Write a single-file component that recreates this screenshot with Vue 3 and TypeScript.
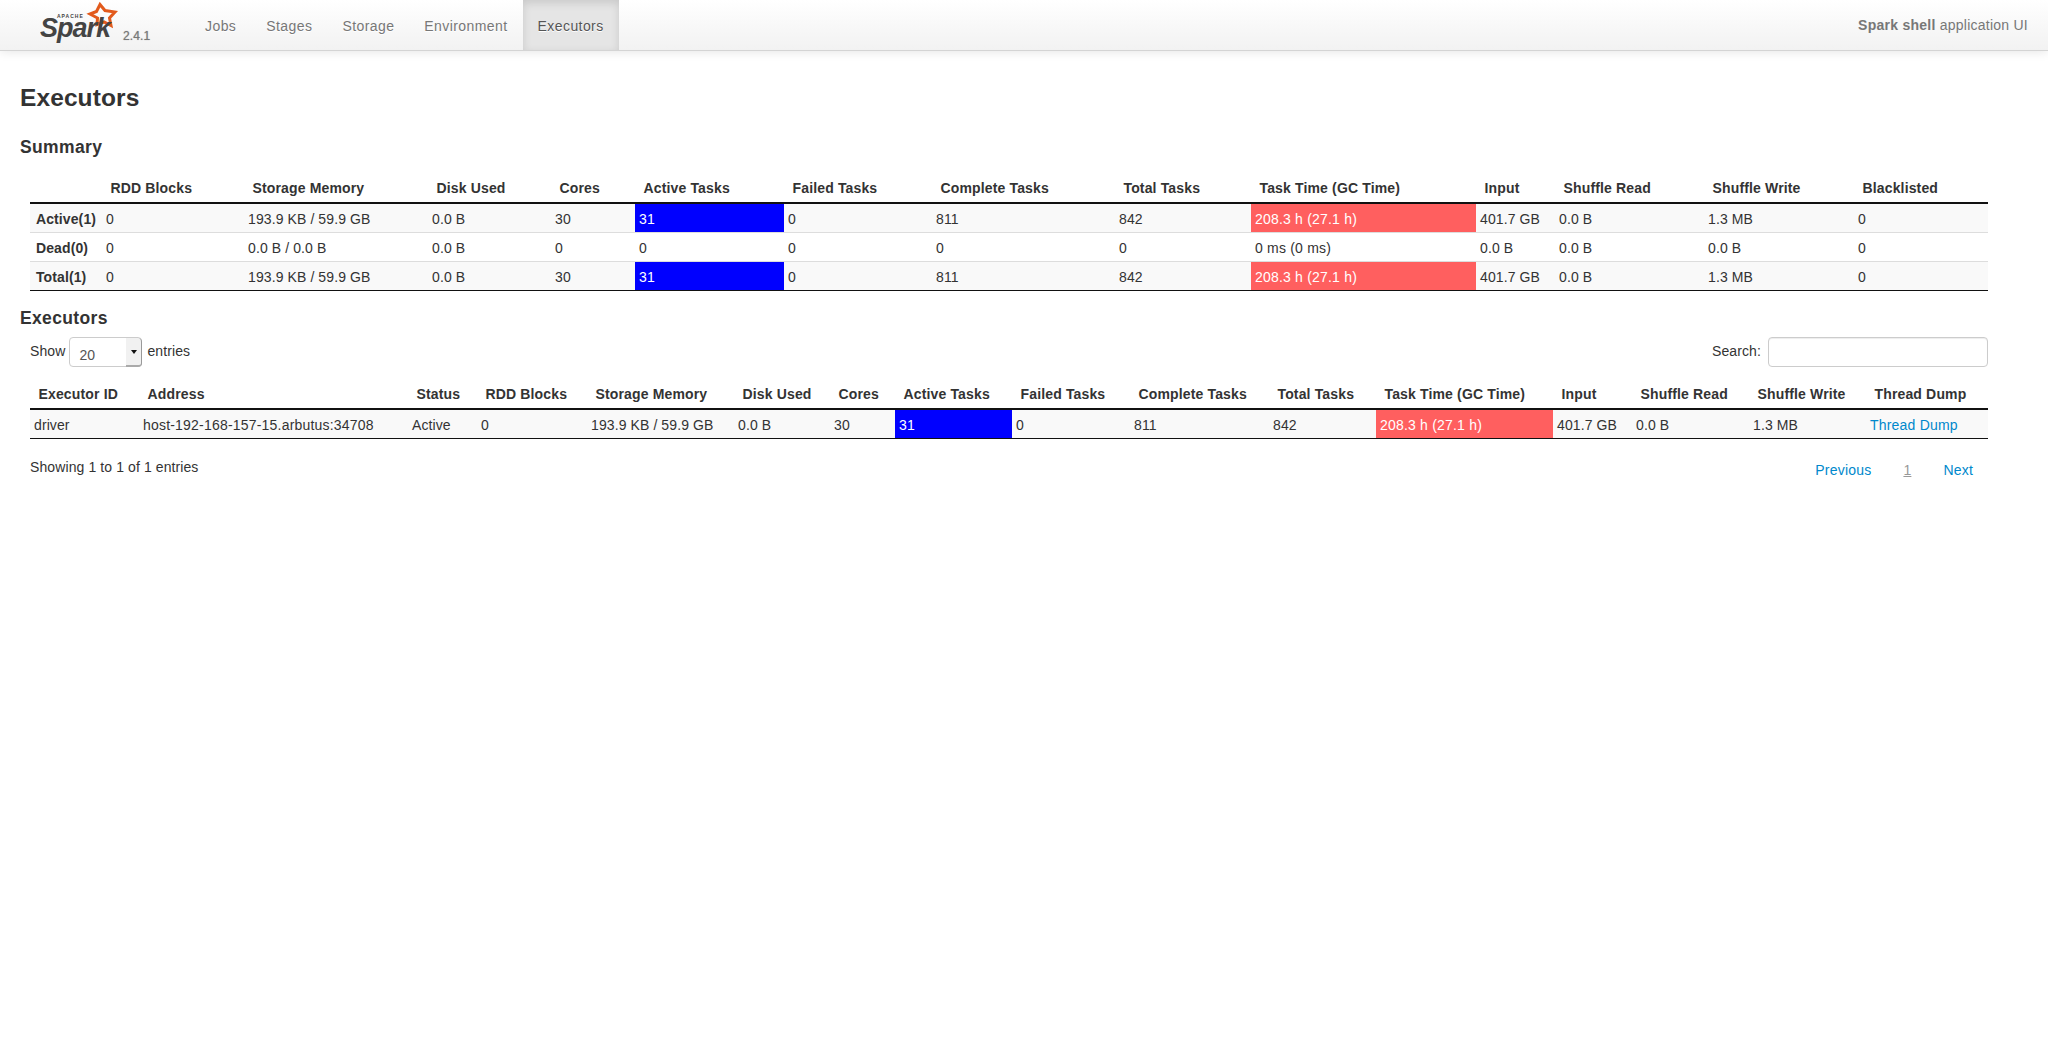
<template>
  <div class="page">
    <!-- top navbar -->
    <header class="navbar">
      <div class="brand">
        <svg class="logo" width="83" height="50" viewBox="0 0 83 50">
          <path
            d="M60 4.5 L65 10.5 L75 12 L69.5 18 L71 25.5 L64 22 L57 24.5 L57.5 18 L50 14 L56.5 11.5 Z"
            fill="none"
            stroke="#e25a1c"
            stroke-width="3"
            stroke-linejoin="miter"
          />
          <text class="logo-apache" x="17" y="18">APACHE</text>
          <text class="logo-spark" x="0" y="37">Spark</text>
        </svg>
        <span class="version">2.4.1</span>
      </div>
      <nav class="nav">
        <a v-for="item in navItems" :key="item" class="nav-item" :class="{ active: item === 'Executors' }">{{ item }}</a>
      </nav>
      <p class="app-name"><strong>Spark shell</strong> application UI</p>
    </header>

    <main class="content">
      <h3>Executors</h3>
      <h4>Summary</h4>
      <table class="grid summary">
        <colgroup>
          <col v-for="w in summaryWidths" :key="w.id" :style="{ width: w.px + 'px' }" />
        </colgroup>
        <thead>
          <tr>
            <th v-for="h in summaryHead" :key="h">{{ h }}</th>
          </tr>
        </thead>
        <tbody>
          <tr v-for="row in summaryRows" :key="row.label">
            <td class="label">{{ row.label }}</td>
            <td v-for="(c, i) in row.cells" :key="i" :class="cellClass(c, row.active)">{{ c }}</td>
          </tr>
        </tbody>
      </table>

      <h4 class="second">Executors</h4>
      <div class="controls">
        <label class="length">
          Show
          <span class="select-box">
            <select>
              <option>20</option>
              <option>40</option>
              <option>60</option>
            </select>
            <span class="select-btn"><i class="caret" /></span>
          </span>
          entries
        </label>
        <label class="search">
          Search:
          <input type="text" />
        </label>
      </div>
      <table class="grid executors">
        <colgroup>
          <col v-for="w in execWidths" :key="w.id" :style="{ width: w.px + 'px' }" />
        </colgroup>
        <thead>
          <tr>
            <th v-for="h in execHead" :key="h">{{ h }}</th>
          </tr>
        </thead>
        <tbody>
          <tr>
            <td v-for="(c, i) in execRow" :key="i" :class="cellClass(c, true)">
              <a v-if="c === 'Thread Dump'" class="link">{{ c }}</a>
              <template v-else>{{ c }}</template>
            </td>
          </tr>
        </tbody>
      </table>
      <div class="footer-row">
        <span class="info">Showing 1 to 1 of 1 entries</span>
        <div class="pager">
          <a class="link">Previous</a>
          <a class="current">1</a>
          <a class="link">Next</a>
        </div>
      </div>
    </main>
  </div>
</template>

<script setup lang="ts">
const navItems = ['Jobs', 'Stages', 'Storage', 'Environment', 'Executors']

const toCols = (list: number[]) => list.map((px, id) => ({ id, px }))

const summaryWidths = toCols([72, 142, 184, 123, 84, 149, 148, 183, 136, 225, 79, 149, 150, 134])
const execWidths = toCols([109, 269, 69, 110, 147, 96, 65, 117, 118, 139, 107, 177, 79, 117, 117, 122])

const summaryHead = [
  '', 'RDD Blocks', 'Storage Memory', 'Disk Used', 'Cores', 'Active Tasks', 'Failed Tasks',
  'Complete Tasks', 'Total Tasks', 'Task Time (GC Time)', 'Input', 'Shuffle Read', 'Shuffle Write', 'Blacklisted'
]

const totals = ['0', '193.9 KB / 59.9 GB', '0.0 B', '30', '31', '0', '811', '842', '208.3 h (27.1 h)', '401.7 GB', '0.0 B', '1.3 MB', '0']

const summaryRows = [
  { label: 'Active(1)', active: true, cells: totals },
  { label: 'Dead(0)', active: false, cells: ['0', '0.0 B / 0.0 B', '0.0 B', '0', '0', '0', '0', '0', '0 ms (0 ms)', '0.0 B', '0.0 B', '0.0 B', '0'] },
  { label: 'Total(1)', active: true, cells: totals }
]

const execHead = [
  'Executor ID', 'Address', 'Status', 'RDD Blocks', 'Storage Memory', 'Disk Used', 'Cores', 'Active Tasks',
  'Failed Tasks', 'Complete Tasks', 'Total Tasks', 'Task Time (GC Time)', 'Input', 'Shuffle Read', 'Shuffle Write', 'Thread Dump'
]

const execRow = [
  'driver', 'host-192-168-157-15.arbutus:34708', 'Active', '0', '193.9 KB / 59.9 GB', '0.0 B', '30', '31', '0',
  '811', '842', '208.3 h (27.1 h)', '401.7 GB', '0.0 B', '1.3 MB', 'Thread Dump'
]

const cellClass = (value: string, active: boolean) => {
  if (value.startsWith('host-') || value === 'Thread Dump' || value.includes(' ms')) return 'wide'
  if (!active) return ''
  if (value === '31') return 'bar-blue'
  if (value.startsWith('208.3')) return 'bar-red wide'
  return ''
}
</script>

<style>
html,
body {
  margin: 0;
  background: #fff;
}
</style>

<style scoped>
.page {
  font-family: 'Liberation Sans', Arial, sans-serif;
  font-size: 14px;
  line-height: 20px;
  letter-spacing: 0.1px;
  color: #333;
}

.navbar {
  display: flex;
  align-items: stretch;
  height: 50px;
  border-bottom: 1px solid #d4d4d4;
  background: linear-gradient(to bottom, #ffffff, #f2f2f2);
  box-shadow: 0 1px 10px rgba(0, 0, 0, 0.1);
}

.brand {
  display: flex;
  width: 150px;
  margin-left: 40px;
}

.logo-spark {
  font-family: 'Liberation Sans', sans-serif;
  font-size: 27px;
  font-weight: 700;
  font-style: italic;
  letter-spacing: -1px;
  fill: #444;
}

.logo-apache {
  font-family: 'Liberation Sans', sans-serif;
  font-size: 5px;
  font-weight: 700;
  letter-spacing: 1px;
  fill: #444;
}

.version {
  margin: 26px 0 0 0;
  font-size: 12px;
  color: #777;
  line-height: 20px;
  text-shadow: 0 0 1px #999;
}

.nav {
  display: flex;
}

.nav-item {
  padding: 16px 15px 14px;
  color: #777;
  letter-spacing: 0.42px;
  text-shadow: 0 1px 0 #fff;
}

.nav-item.active {
  color: #555;
  background: #e5e5e5;
  box-shadow: inset 0 3px 8px rgba(0, 0, 0, 0.125);
}

.app-name {
  margin: 15px 20px 0 auto;
  color: #777;
  letter-spacing: 0.25px;
}

.content {
  padding: 0 20px;
}

h3 {
  margin: 27px 0 19px;
  font-size: 24.5px;
  line-height: 40px;
  font-weight: 700;
}

h4 {
  margin: 0 0 17px;
  font-size: 17.5px;
  line-height: 20px;
  font-weight: 700;
  letter-spacing: 0.35px;
}

h4.second {
  margin: 17px 0 9px;
}

.grid {
  margin-left: 10px;
  width: 1958px;
  table-layout: fixed;
  border-collapse: separate;
  border-spacing: 0;
}

.grid th {
  padding: 4px 8px 4px 8.5px;
  text-align: left;
  font-weight: 700;
  letter-spacing: 0.15px;
  border-bottom: 2px solid #111;
  white-space: nowrap;
}

.grid td {
  padding: 5px 4px 3px;
  border-top: 1px solid #ddd;
  white-space: nowrap;
}

.grid td.wide {
  letter-spacing: 0.2px;
}

.grid tbody tr:first-child td {
  border-top: 0;
}

.grid tbody tr:last-child td {
  border-bottom: 1px solid #111;
}

.grid tbody tr:nth-child(odd) td {
  background: #f9f9f9;
}

.grid td.label {
  padding-left: 6px;
  font-weight: 700;
}

.grid tbody tr td.bar-blue {
  background: #0000ff;
  color: #fff;
}

.grid tbody tr td.bar-red {
  background: #ff5f5f;
  color: #fff;
}

.controls {
  display: flex;
  justify-content: space-between;
  margin: 0 40px 13px 10px;
  height: 30px;
}

.length {
  display: flex;
  align-items: flex-start;
  gap: 5px;
  line-height: 28px;
}

.select-box {
  position: relative;
  display: block;
  width: 73px;
  height: 30px;
  margin-left: -1px;
}

select {
  display: block;
  width: 100%;
  height: 100%;
  box-sizing: border-box;
  padding: 6px 0 0 9px;
  appearance: none;
  border: 1px solid #ccc;
  border-radius: 4px;
  background: #fff;
  color: #555;
  font: 14px/20px 'Liberation Sans', Arial, sans-serif;
}

.select-btn {
  position: absolute;
  top: 1px;
  right: 0;
  bottom: 0;
  width: 16px;
  display: flex;
  align-items: center;
  justify-content: center;
  box-sizing: border-box;
  background: #f1f1f1;
  border-right: 1px solid #999;
  border-bottom: 2px solid #aaa;
  border-radius: 0 4px 4px 0;
}

.caret {
  width: 0;
  height: 0;
  border-left: 3.5px solid transparent;
  border-right: 3.5px solid transparent;
  border-top: 4px solid #111;
}

.search {
  display: flex;
  gap: 7px;
  line-height: 28px;
}

input {
  width: 220px;
  height: 30px;
  box-sizing: border-box;
  border: 1px solid #ccc;
  border-radius: 4px;
  box-shadow: inset 0 1px 1px rgba(0, 0, 0, 0.075);
}

.footer-row {
  display: flex;
  justify-content: space-between;
  margin: 18px 40px 0 10px;
}

.pager {
  display: flex;
  gap: 32px;
  padding: 3px 15px 0 0;
  letter-spacing: 0.2px;
}

.link {
  color: #0088cc;
}

.current {
  color: #999;
  text-decoration: underline;
}
</style>
